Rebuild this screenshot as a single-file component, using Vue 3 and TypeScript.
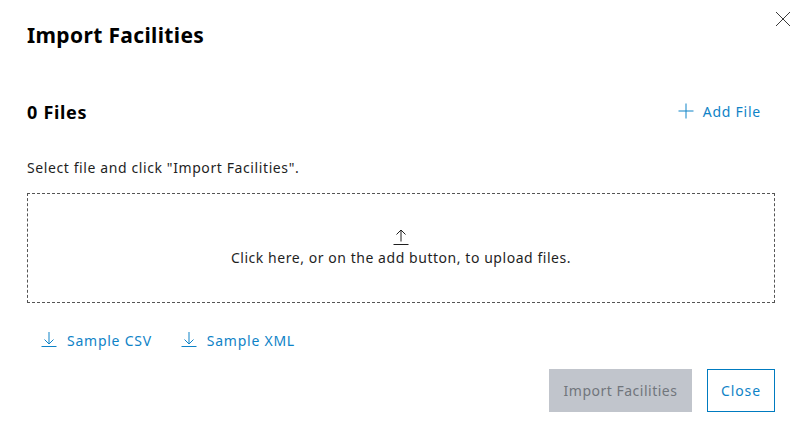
<script setup lang="ts">
const samples: string[] = ['Sample CSV', 'Sample XML']
</script>

<template>
  <div class="dialog">
    <button class="close-x" aria-label="Close">
      <svg width="16" height="16" viewBox="0 0 16 16"><path d="M1 1L15 15M15 1L1 15" stroke="#3a3a3a" stroke-width="1" fill="none" /></svg>
    </button>
    <h1 class="title">Import Facilities</h1>
    <div class="files-row">
      <h2 class="files">0 Files</h2>
      <a class="link add">
        <svg width="16" height="16" viewBox="0 0 16 16"><path d="M8 .5V15.5M.5 8H15.5" stroke="#0f83c7" stroke-width="1" fill="none" /></svg>
        <span>Add File</span>
      </a>
    </div>
    <p class="hint">Select file and click "Import Facilities".</p>
    <div class="drop">
      <svg width="16" height="16" viewBox="0 0 16 16"><path d="M8 12.5V1M3.5 5.5L8 1L12.5 5.5M.5 15.5H15.5" stroke="#1f1f1f" stroke-width="1" fill="none" /></svg>
      <span class="drop-text">Click here, or on the add button, to upload files.</span>
    </div>
    <div class="samples">
      <a v-for="s in samples" :key="s" class="link sample">
        <svg width="16" height="16" viewBox="0 0 16 16"><path d="M8 0V12M3.5 7.5L8 12L12.5 7.5M.5 14.5H15.5" stroke="#0f83c7" stroke-width="1" fill="none" /></svg>
        <span>{{ s }}</span>
      </a>
    </div>
    <div class="actions">
      <button class="btn disabled">Import Facilities</button>
      <button class="btn outline">Close</button>
    </div>
  </div>
</template>

<style scoped>
.dialog {
  position: relative;
  box-sizing: border-box;
  width: 802px;
  height: 437px;
  padding: 20px 27px 0;
  background: #fff;
  font-family: "Noto Sans", sans-serif;
  font-size: 14px;
  color: #000;
}
.close-x {
  position: absolute;
  top: 11px;
  right: 11px;
  padding: 0;
  border: 0;
  background: none;
  display: flex;
}
.title {
  margin: 0;
  font-size: 21px;
  line-height: 30px;
  font-weight: 700;
  letter-spacing: 0.35px;
}
.files-row {
  display: flex;
  align-items: center;
  justify-content: space-between;
  margin-top: 47px;
  height: 30px;
  padding-right: 14px;
}
.files {
  margin: 0;
  font-size: 18px;
  line-height: 30px;
  font-weight: 700;
  letter-spacing: 0.7px;
}
.link {
  display: inline-flex;
  align-items: center;
  gap: 10px;
  color: #0f83c7;
  letter-spacing: 0.75px;
}
.add {
  gap: 9px;
  margin-bottom: 2px;
}
.hint {
  margin: 31px 0 0;
  line-height: 20px;
  color: #1f1f1f;
  letter-spacing: 0.6px;
}
.drop {
  display: flex;
  flex-direction: column;
  align-items: center;
  box-sizing: border-box;
  height: 110px;
  margin-top: 15px;
  padding-top: 35px;
  border: 1px dashed #555;
  color: #1f1f1f;
  line-height: 20px;
  letter-spacing: 0.55px;
}
.drop-text {
  margin-top: 3px;
}
.samples {
  display: flex;
  gap: 29px;
  margin-top: 27px;
  padding-left: 14px;
  height: 20px;
}
.actions {
  display: flex;
  justify-content: flex-end;
  gap: 15px;
  margin-top: 19px;
}
.btn {
  height: 43px;
  font: inherit;
  box-sizing: border-box;
}
.disabled {
  width: 143px;
  border: 0;
  background: #c1c5cc;
  color: #71767c;
  letter-spacing: 0.5px;
}
.outline {
  width: 68px;
  border: 1px solid #007bc0;
  background: #fff;
  color: #0f83c7;
  letter-spacing: 0.9px;
}
</style>
